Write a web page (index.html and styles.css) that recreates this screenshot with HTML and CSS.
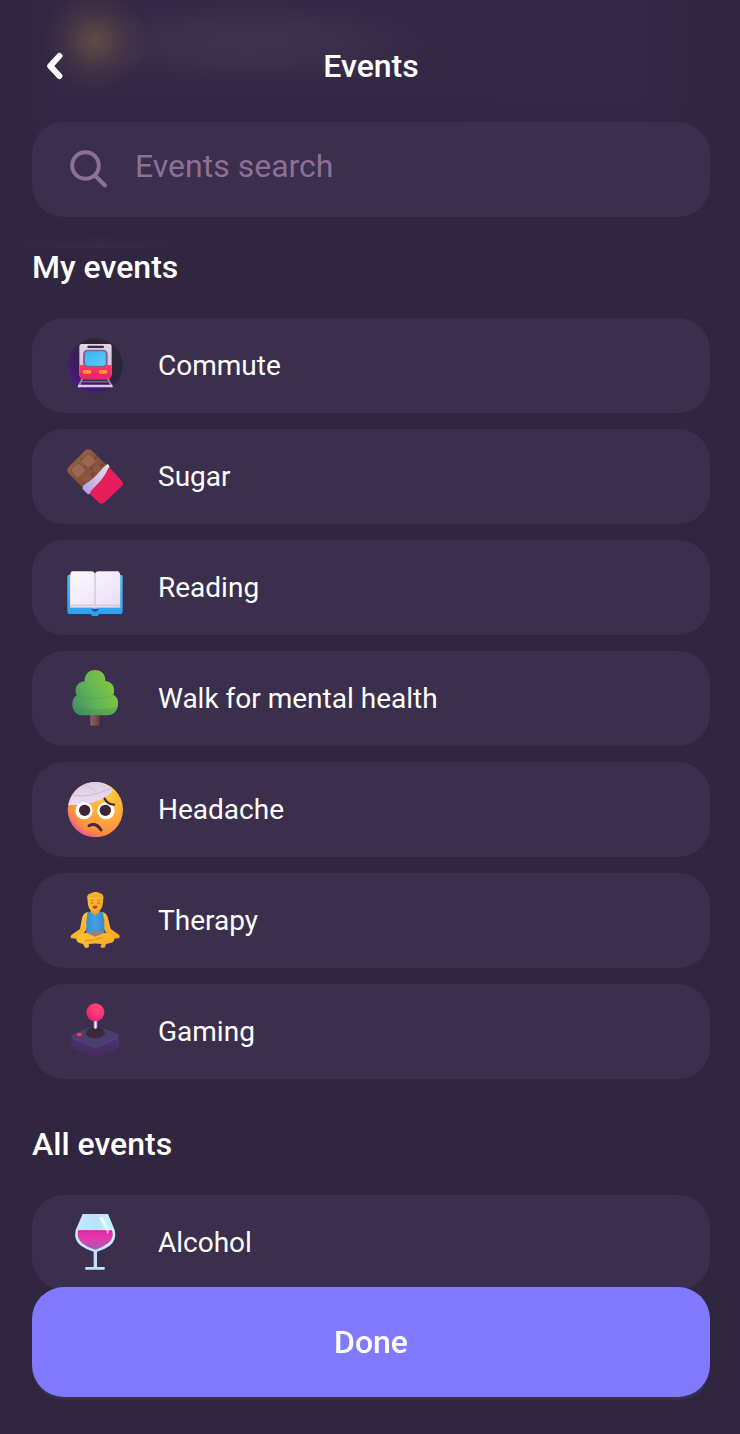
FILE: index.html
```html
<!DOCTYPE html>
<html lang="en">
<head>
<meta charset="utf-8">
<meta name="viewport" content="width=device-width, initial-scale=1">
<title>Events</title>
<link rel="stylesheet" href="styles.css">
</head>
<body>
<div class="screen">
  <header class="header">
    <div class="titlebar">
      <button class="back" type="button" aria-label="Back">
        <svg class="back-icon" viewBox="0 0 18 28" aria-hidden="true"><path d="M13.400 4 4.200 14l9.200 10" fill="none" stroke="#fff" stroke-width="6" stroke-linecap="round" stroke-linejoin="round"/></svg>
      </button>
      <h1 class="title">Events</h1>
    </div>
    <label class="search">
      <svg class="search-icon" viewBox="0 0 38 38" aria-hidden="true"><g fill="none" stroke="#8c7095" stroke-width="4" stroke-linecap="round"><circle cx="15.500" cy="14.500" r="13.300"/><path d="M25 24.500 35 34.500"/></g></svg>
      <input class="search-input" type="search" placeholder="Events search" aria-label="Events search">
    </label>
  </header>

  <main class="content">
    <section class="group">
      <h2 class="group-title">My events</h2>
      <ul class="list">
        <li><button class="event" type="button">
          <svg class="emoji" viewBox="36 36 171 171" aria-hidden="true">
            <defs>
              <radialGradient id="tunnel" cx=".75" cy=".25" r=".9"><stop offset="0" stop-color="#2b2831"/><stop offset=".5" stop-color="#2b2338"/><stop offset="1" stop-color="#54158a"/></radialGradient>
              <linearGradient id="train" x2="0" y2="1"><stop offset="0" stop-color="#e3d4ea"/><stop offset="1" stop-color="#c9b9dc"/></linearGradient>
              <linearGradient id="trainLow" x2="0" y2="1"><stop offset="0" stop-color="#ff3b5e"/><stop offset="1" stop-color="#ec1d75"/></linearGradient>
              <linearGradient id="glass" x2="1" y2="1"><stop offset="0" stop-color="#35b4f5"/><stop offset="1" stop-color="#62c9fb"/></linearGradient>
            </defs>
            <circle cx="121" cy="122" r="82" fill="url(#tunnel)"/>
            <path d="m82 161-12 26M158 161l14 26" stroke="#9d83ae" stroke-width="6"/>
            <path d="M80 170h82" stroke="#7c6290" stroke-width="5"/>
            <path d="M69 183h103" stroke="#dac8e8" stroke-width="8"/>
            <path d="M79 57h84q7 0 7 8v80q0 18-18 18H91q-18 0-18-18V65q0-8 6-8z" fill="url(#train)"/>
            <path d="M73 120h97v25q0 18-18 18H91q-18 0-18-18z" fill="url(#trainLow)"/>
            <rect x="97" y="62" width="50" height="7" rx="3" fill="#382641"/>
            <rect x="84" y="74" width="74" height="53" rx="13" fill="#8b6287"/>
            <rect x="90" y="79" width="62" height="43" rx="9" fill="url(#glass)"/>
            <rect x="83" y="135" width="26" height="11" rx="5" fill="#ff9b28"/><rect x="131" y="135" width="26" height="11" rx="5" fill="#ff9b28"/>
          </svg>
          <span>Commute</span></button></li>
        <li><button class="event" type="button">
          <svg class="emoji" viewBox="36 36 171 171" aria-hidden="true">
            <defs>
              <linearGradient id="choc" x2="1" y2="1"><stop offset="0" stop-color="#99644d"/><stop offset="1" stop-color="#75442f"/></linearGradient>
              <linearGradient id="wrap" x2="1" y2="1"><stop offset="0" stop-color="#dc2455"/><stop offset=".7" stop-color="#e91d5c"/><stop offset="1" stop-color="#c92550"/></linearGradient>
              <linearGradient id="foil" x1="1" x2="0" y2="1"><stop offset="0" stop-color="#e8e2f0"/><stop offset="1" stop-color="#b299df"/></linearGradient>
            </defs>
            <path d="M41 93 91 43q9-7 18 0l48 46-72 68-45-46q-6-9 1-18z" fill="url(#choc)"/>
            <path d="m77 66 37 36M57 121l70-61M84 145l60-62" stroke="#6e4030" stroke-width="4" fill="none"/>
            <path d="m80 72 16-15q6-4 11 1l13 13q4 5-1 10l-14 12q-5 4-9 0L79 80q-4-4 1-8zM51 96l13-12q5-4 10 0l16 15q4 5-1 9l-17 16q-5 4-9-1L49 107q-4-5 2-11z" fill="#9b6750" stroke="#85513d" stroke-width="3"/>
            <path d="m82 127 12-11q5-4 10 0l9 8-18 19-13-7q-3-4 0-9zM113 100l12-12q4-4 8-1l13 10-21 15-10-5q-4-3-2-7z" fill="#8b5741"/>
            <path d="M82 158q-1-7 7-13 26-15 47-41 12-13 20-19 7-1 7 6v9l-52 70q-7 7-14 3z" fill="url(#foil)"/>
            <path d="M160 96q4-1 8 4l32 34q8 8 0 17l-51 48q-10 8-18 0l-27-26q3-9 18-23 26-24 38-54z" fill="url(#wrap)"/>
          </svg>
          <span>Sugar</span></button></li>
        <li><button class="event" type="button">
          <svg class="emoji" viewBox="36 27 171 171" aria-hidden="true">
            <defs>
              <linearGradient id="cover" x2="0" y2="1"><stop offset="0" stop-color="#48c2f9"/><stop offset="1" stop-color="#2ba0f0"/></linearGradient>
              <linearGradient id="page" x2="1" y2="1"><stop offset="0" stop-color="#fcf9ff"/><stop offset="1" stop-color="#e9ddf3"/></linearGradient>
            </defs>
            <path d="M43 74h154q6 0 6 7v104q0 7-6 7h-65q-2 8-12 8t-12-8H43q-6 0-6-7V81q0-7 6-7z" fill="url(#cover)"/>
            <path d="M45 77h151v97h-66q-10 10-20 0H45z" fill="#cbb9dc"/>
            <path d="M52 64h58q8 0 10 8 2-8 11-8h56q6 0 8 7v94q-1 6-8 6h-58q-8 0-9 4-2-4-10-4H54q-8 0-8-8V72q1-8 6-8z" fill="url(#page)"/>
            <path d="M120 72v102" stroke="#dccfe6" stroke-width="6"/>
            <path d="M49 166h67M124 166h69" stroke="#d9c8e2" stroke-width="5"/>
            <path d="M109 176h22q-3 9-11 9t-11-9z" fill="#1b5b9c"/>
          </svg>
          <span>Reading</span></button></li>
        <li><button class="event" type="button">
          <svg class="emoji" viewBox="36 29 171 171" aria-hidden="true">
            <defs>
              <linearGradient id="leaf" x1="0" y1=".8" x2="1" y2=".3"><stop offset="0" stop-color="#43906a"/><stop offset=".5" stop-color="#67b652"/><stop offset="1" stop-color="#86cb42"/></linearGradient>
              <linearGradient id="trunk"><stop offset="0" stop-color="#925f57"/><stop offset="1" stop-color="#6c3e41"/></linearGradient>
              <linearGradient id="shade" x2="0" y2="1"><stop offset="0" stop-color="#379445" stop-opacity="0"/><stop offset="1" stop-color="#37864c" stop-opacity=".35"/></linearGradient>
            </defs>
            <path d="M106 155h27v41h-27z" fill="url(#trunk)"/>
            <path d="M120 29c19 0 32 13 31 33 20 1 32 20 24 42 11 4 15 15 14 28-1 20-14 33-32 33H85c-20 0-32-13-33-32 0-13 4-23 13-28-10-22 3-41 24-42-1-20 12-34 31-34z" fill="url(#leaf)"/>
            <path d="M89 62c12 16 49 16 62 0q0 14-31 14T89 62zM65 104c22 10 86 10 110 0-9 17-100 19-110 0zM53 140q67 12 134 1-5 24-30 24H85q-28 0-32-25z" fill="url(#shade)"/>
          </svg>
          <span>Walk for mental health</span></button></li>
        <li><button class="event" type="button">
          <svg class="emoji" viewBox="36 31 171 171" aria-hidden="true">
            <defs>
              <radialGradient id="face" cx=".68" cy=".25" r=".82"><stop offset="0" stop-color="#ffce36"/><stop offset=".55" stop-color="#ffa63a"/><stop offset=".85" stop-color="#f88b43"/><stop offset="1" stop-color="#ed4c9a"/></radialGradient>
              <linearGradient id="bandage" x2="0" y2="1"><stop offset="0" stop-color="#d9d0dc"/><stop offset="1" stop-color="#ecd9fa"/></linearGradient>
            </defs>
            <circle cx="121" cy="117" r="83" fill="url(#face)"/>
            <path d="M40 103C49 60 83 34 120 34q25 0 44 13c8 6 10 14 6 19q-50 41-130 37z" fill="url(#bandage)"/>
            <path d="M54 74q48 9 113-20M88 42q18 6 34 20" fill="none" stroke="#c8bacf" stroke-width="3"/>
            <circle cx="87" cy="120" r="26" fill="#fff"/><circle cx="153" cy="120" r="26" fill="#fff"/>
            <circle cx="89" cy="119" r="17" fill="#422434"/><circle cx="151" cy="119" r="17" fill="#422434"/>
            <path d="M149 84q8 17 28 18" fill="none" stroke="#4a2840" stroke-width="7" stroke-linecap="round"/>
            <path d="M102 165q20-12 36 13" fill="none" stroke="#4a2840" stroke-width="9" stroke-linecap="round"/>
          </svg>
          <span>Headache</span></button></li>
        <li><button class="event" type="button">
          <svg class="emoji" viewBox="36 34 171 171" aria-hidden="true">
            <defs>
              <linearGradient id="skin" x2="1" y2="1"><stop offset="0" stop-color="#ffc52d"/><stop offset="1" stop-color="#f5a52a"/></linearGradient>
              <linearGradient id="shirt" x2="1"><stop offset="0" stop-color="#358ed7"/><stop offset=".5" stop-color="#42a0e4"/><stop offset="1" stop-color="#3b86cd"/></linearGradient>
            </defs>
            <path d="M107 82h27v22h-27z" fill="#efa027"/>
            <path d="M99 94q-15 3-18 19l-6 32-26 18q-5 5 0 10l16 1 25-20 10-22zM141 94q15 3 18 19l8 32 25 17q5 6-1 11l-15 1-25-21-10-21z" fill="url(#skin)"/>
            <path d="M97 96l9-4q14 20 29 0l9 4q1 14 4 22v38q-27 14-54 0v-38q3-8 3-22z" fill="url(#shirt)"/>
            <path d="M95 152q26-5 52 0l5 18H90z" fill="#8b858e"/>
            <path d="M64 174q12-20 34-16l22 10 26-10q22-4 32 16 0 10-11 13l-14 3-3 10q-8 4-14-2l4-8q-20-3-39 0l1 8q-6 7-13 2l-5-10-10-3q-10-3-10-13z" fill="url(#skin)"/>
            <path d="M90 180q32 0 54-11" fill="none" stroke="#ee9030" stroke-width="4"/>
            <path d="M97 50q-1-10 12-12 12-8 26 0 12 3 10 16l-2 18q-3 20-22 20T99 72z" fill="url(#skin)"/>
            <path d="M97 56q0-20 24-20 25 0 23 20l-6-6q-16 3-35 0z" fill="#f5ad2b"/>
            <path d="M106 60q5-4 10 0M126 60q5-4 10 0" fill="none" stroke="#c87a25" stroke-width="3"/>
            <path d="M107 67h8M127 67h8" stroke="#a5621f" stroke-width="3"/>
            <path d="M113 76q8-2 15 0-1 8-8 8t-7-8z" fill="#d5273f"/>
          </svg>
          <span>Therapy</span></button></li>
        <li><button class="event" type="button">
          <svg class="emoji" viewBox="36 37 171 171" aria-hidden="true">
            <defs>
              <radialGradient id="ball" cx=".65" cy=".3" r=".8"><stop offset="0" stop-color="#ff4d72"/><stop offset=".6" stop-color="#fb2f72"/><stop offset="1" stop-color="#d9207a"/></radialGradient>
              <linearGradient id="baseTop" x2="1" y2="1"><stop offset="0" stop-color="#42405c"/><stop offset="1" stop-color="#4d3e7c"/></linearGradient>
              <linearGradient id="baseSide" x2="0" y2="1"><stop offset="0" stop-color="#493a72"/><stop offset="1" stop-color="#45265c"/></linearGradient>
              <linearGradient id="stick"><stop offset="0" stop-color="#b38dbc"/><stop offset=".5" stop-color="#f9e8fc"/><stop offset="1" stop-color="#ac83b8"/></linearGradient>
            </defs>
            <path d="M49 135h143v33q0 5-7 9l-57 23q-8 3-14 0l-58-25q-7-3-7-8z" fill="url(#baseSide)"/>
            <path d="M53 131 113 105q8-3 15 0l60 25q8 5 0 11l-60 27q-8 3-15 0L54 141q-8-5-1-10z" fill="url(#baseTop)"/>
            <path d="m51 141 62 27q8 3 15 0l62-27" fill="none" stroke="#50448d" stroke-width="3"/>
            <path d="M93 130q0-16 22-25h12q22 9 22 25c-5 17-51 17-56 0z" fill="#3d263f"/>
            <path d="M116 87h11v25q-6 4-11 0z" fill="url(#stick)"/>
            <circle cx="121" cy="65" r="27" fill="url(#ball)"/>
            <ellipse cx="73" cy="134" rx="9" ry="5" fill="#c51d64"/><ellipse cx="73" cy="131" rx="8" ry="5" fill="#ff3366"/>
          </svg>
          <span>Gaming</span></button></li>
      </ul>
    </section>

    <section class="group">
      <h2 class="group-title">All events</h2>
      <ul class="list">
        <li><button class="event" type="button">
          <svg class="emoji" viewBox="36 33 171 171" aria-hidden="true">
            <defs>
              <linearGradient id="bowl" x2="1"><stop offset="0" stop-color="#c7e9ff"/><stop offset=".5" stop-color="#bce0fa"/><stop offset="1" stop-color="#caf5ff"/></linearGradient>
              <linearGradient id="wine" x2="0" y2="1"><stop offset="0" stop-color="#e52ba8"/><stop offset=".45" stop-color="#e43aae"/><stop offset="1" stop-color="#9e5eb4"/></linearGradient>
            </defs>
            <path d="M83 33h76l20 48q7 30-15 47-16 12-38 18v46h22q4 4 0 8H92q-4-4 0-8h24v-46q-22-6-38-18-23-17-16-47z" fill="url(#bowl)"/>
            <path d="M70 82h101q8 23-11 38-18 14-39 20-23-6-40-20-18-15-11-38z" fill="url(#wine)"/>
            <path d="m133 43 9-2 21 41-5 11z" fill="#fff" opacity=".8"/>
            <path d="M70 84h101" stroke="#c51889" stroke-width="3" opacity=".6"/>
          </svg>
          <span>Alcohol</span></button></li>
      </ul>
    </section>
  </main>

  <footer class="footer">
    <button class="done" type="button">Done</button>
  </footer>
</div>
</body>
</html>
```
FILE: styles.css
```css
* {
  box-sizing: border-box;
}

body {
  margin: 0;
  background: #30263f;
  color: #fff;
  font-family: Roboto, "Liberation Sans", sans-serif;
}

button,
input {
  margin: 0;
  border: 0;
  padding: 0;
  background: none;
  color: inherit;
  font: inherit;
}

button {
  cursor: pointer;
}

.screen {
  height: 100vh;
  overflow-y: auto;
  scrollbar-width: none;
}

.header {
  position: sticky;
  top: 0;
  z-index: 1;
  padding: 36px 30px 31px 32px;
  background:
    radial-gradient(circle at 95px 41px, rgba(98, 78, 70, 0.9) 0, rgba(94, 73, 69, 0.75) 14px, rgba(84, 62, 70, 0.4) 30px, rgba(70, 50, 70, 0) 52px),
    radial-gradient(ellipse 190px 44px at 250px 42px, #3e334d 0, rgba(62, 51, 77, 0.7) 50%, rgba(62, 51, 77, 0) 100%),
    radial-gradient(ellipse 92px 12px at 98px 248px, #382d47 0, rgba(56, 45, 71, 0) 100%),
    linear-gradient(to bottom, rgba(48, 38, 63, 0) 90px, #30263f 220px),
    linear-gradient(to right, #30263f 0, #332845 60px, #332846 calc(100% - 100px), #30263f 100%);
}

.titlebar {
  display: grid;
  grid-template-columns: 46px 1fr 46px;
  align-items: center;
  height: 60px;
  margin-bottom: 26px;
}

.back {
  display: flex;
  align-items: center;
  justify-content: center;
  height: 60px;
}

.back-icon {
  width: 18px;
  height: 28px;
}

.title {
  margin: 0;
  font-size: 32px;
  font-weight: 500;
  line-height: 40px;
  text-align: center;
}

.search {
  display: flex;
  align-items: center;
  gap: 27px;
  height: 95px;
  padding: 0 38px;
  border-radius: 32px;
  background: #3b2f4d;
}

.search-icon {
  flex: none;
  width: 38px;
  height: 38px;
  overflow: visible;
}

.search-input {
  flex: 1;
  min-width: 0;
  height: 100%;
  padding-bottom: 8px;
  outline: none;
  font-size: 32px;
}

.search-input::placeholder {
  color: #8c7095;
  opacity: 1;
}

.content {
  display: grid;
  gap: 46px;
  padding: 0 30px 0 32px;
}

.group {
  display: grid;
  gap: 32px;
}

.group-title {
  margin: 0;
  font-size: 32px;
  font-weight: 500;
  line-height: 38px;
}

.list {
  display: grid;
  gap: 16px;
  margin: 0;
  padding: 0;
  list-style: none;
}

.event {
  display: flex;
  align-items: center;
  gap: 34px;
  width: 100%;
  height: 95px;
  padding: 0 35px;
  border-radius: 32px;
  background: #3b2f4d;
  font-size: 28px;
  line-height: 36px;
  text-align: left;
}

.emoji {
  flex: none;
  width: 57px;
  height: 57px;
}

.footer {
  position: sticky;
  bottom: 0;
  z-index: 1;
  padding: 0 30px 37px 32px;
}

.done {
  display: block;
  width: 100%;
  height: 110px;
  border-radius: 32px;
  background: #7f7aff;
  box-shadow: 0 3px 0 #3b2f4d;
  font-size: 32px;
  font-weight: 500;
}
```
